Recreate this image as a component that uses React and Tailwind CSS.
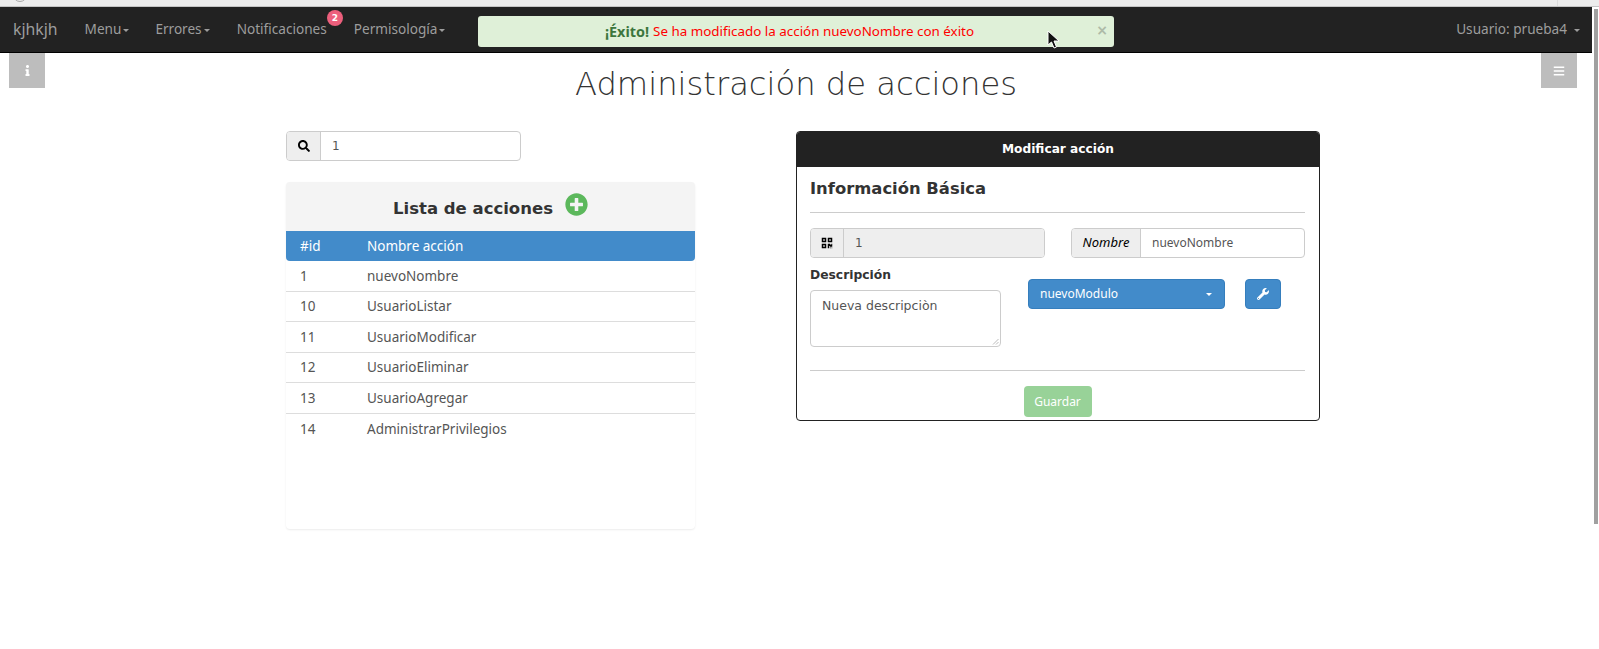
import React from 'react';
import {FaBars, FaInfo, FaPlusCircle, FaQrcode, FaSearch, FaWrench} from "react-icons/fa";

const ubuntu = "font-['Noto_Sans','Open_Sans',sans-serif]";
const dejavu = "font-['DejaVu_Sans',sans-serif]";

const acciones = [
    {id: 1, nombre: "nuevoNombre"},
    {id: 10, nombre: "UsuarioListar"},
    {id: 11, nombre: "UsuarioModificar"},
    {id: 12, nombre: "UsuarioEliminar"},
    {id: 13, nombre: "UsuarioAgregar"},
    {id: 14, nombre: "AdministrarPrivilegios"}
];

const Caret = ({className = ""}) => (
    <span className={"inline-block h-0 w-0 border-x-[3px] border-t-[3px] border-x-transparent border-t-current " + className}/>
);

const NavItem = ({children, caret = true, className = ""}) => (
    <div className={"relative flex items-center text-[13.6px] text-[#9d9d9d] " + className}>
        {children}
        {caret && <Caret className="ml-[2px] mt-[2px]"/>}
    </div>
);

const Navbar = () => (
    <nav className={"relative flex h-[46px] w-full items-center border-b border-black bg-[#222222] " + ubuntu}>
        <div className="ml-[13px] text-[15.8px] text-[#9d9d9d]">kjhkjh</div>
        <NavItem className="ml-[27px]">Menu</NavItem>
        <NavItem className="ml-[26px]">Errores</NavItem>
        <NavItem caret={false} className="ml-[27px]">
            Notificaciones
            <span className={"absolute -right-[16px] -top-[9px] flex h-[16px] w-[16px] items-center justify-center rounded-full bg-[#ec5f7c] text-[9px] font-bold text-white " + dejavu}>2</span>
        </NavItem>
        <NavItem className="ml-[27px]">Permisología</NavItem>
        <NavItem caret={false} className="ml-auto mr-[12px]">
            Usuario: prueba4
            <Caret className="ml-[7px] mt-[2px]"/>
        </NavItem>
        <div className="absolute left-[478px] top-[9px] flex h-[31px] w-[636px] items-center justify-center rounded-[3px] bg-[#dff0d8] pr-[13px] text-[13.4px]">
            <span className="text-[14.4px] font-bold text-[#3c763d]">¡Éxito!</span>
            <span className="ml-[4px] text-[#ff0000]">Se ha modificado la acción nuevoNombre con éxito</span>
            <span className={"absolute right-[6px] top-[4px] text-[14px] font-bold leading-[20px] text-[#aebba8] " + dejavu}>×</span>
        </div>
    </nav>
);

const SearchBox = () => (
    <div className={"flex h-[30px] w-[235px] rounded-[4px] border border-[#cccccc] text-[12px] text-[#555555] " + dejavu}>
        <div className="flex w-[34px] items-center justify-center rounded-l-[3px] border-r border-[#cccccc] bg-[#eeeeee] text-black">
            <FaSearch size={12}/>
        </div>
        <div className="flex items-center pl-[11px]">1</div>
    </div>
);

const ListaAcciones = () => (
    <div className={"mt-[21px] flex h-[347px] flex-col rounded-[4px] bg-white shadow-[0_1px_2px_rgba(0,0,0,0.08)] " + ubuntu}>
        <div className={"flex h-[49px] items-center justify-center rounded-t-[4px] bg-[#f4f4f4] pt-[6px] text-[16.5px] font-bold text-[#333333] " + dejavu}>
            Lista de acciones
            <FaPlusCircle size={23} className="mb-[11px] ml-[12px] text-[#5cb85c]"/>
        </div>
        <div className="flex h-[30px] items-center rounded-b-[4px] bg-[#428bca] text-[13.5px] text-white">
            <div className="w-[81px] pl-[14px]">#id</div>
            <div>Nombre acción</div>
        </div>
        {acciones.map((item, i) => (
            <div key={i} className={"flex h-[30.5px] shrink-0 items-center text-[13.5px] text-[#555555] " + (i < 5 ? "border-b border-[#dddddd]" : "")}>
                <div className="w-[81px] pl-[14px]">{item.id}</div>
                <div>{item.nombre}</div>
            </div>
        ))}
    </div>
);

const InputGroup = ({addon, value, className = "", addonStyle = "", valueStyle = ""}) => (
    <div className={"flex h-[30px] rounded-[4px] border border-[#cccccc] text-[12px] text-[#555555] " + className}>
        <div className={"flex items-center justify-center rounded-l-[3px] border-r border-[#cccccc] bg-[#eeeeee] " + addonStyle}>{addon}</div>
        <div className={"flex flex-1 items-center rounded-r-[3px] " + valueStyle}>{value}</div>
    </div>
);

const ModificarAccion = () => (
    <div className="h-[290px] w-[524px] rounded-[4px] border border-[#222222] bg-white">
        <div className={"flex h-[35px] items-center justify-center rounded-t-[3px] bg-[#222222] text-[12.2px] font-bold text-white " + dejavu}>Modificar acción</div>
        <div className="pl-[13px] pr-[14px]">
            <div className={"mt-[12px] text-[16.4px] font-bold leading-[20px] text-[#333333] " + dejavu}>Información Básica</div>
            <hr className="mt-[13px] border-[#cccccc]"/>
            <div className={"mt-[15px] flex justify-between " + dejavu}>
                <InputGroup className="w-[235px]" addonStyle="w-[33px] text-black" valueStyle="bg-[#eeeeee] pl-[11px]" addon={<FaQrcode size={12}/>} value="1"/>
                <InputGroup className={"w-[234px] " + ubuntu} addonStyle="w-[69px] text-[13px] italic text-black" valueStyle="pl-[11px]" addon="Nombre" value="nuevoNombre"/>
            </div>
            <div className="flex">
                <div className="w-[218px]">
                    <div className={"mt-[9px] text-[12.3px] font-bold leading-[16px] text-[#333333] " + dejavu}>Descripción</div>
                    <div className={"relative mt-[7px] h-[57px] w-[191px] rounded-[4px] border border-[#cccccc] px-[11px] pt-[6px] text-[12.5px] text-[#555555] " + dejavu}>
                        Nueva descripciòn
                        <svg className="absolute bottom-[1px] right-[1px]" width="7" height="7" viewBox="0 0 7 7">
                            <path d="M6.5 1 L1 6.5 M6.5 4 L4 6.5" stroke="#bbbbbb" strokeWidth="1" fill="none"/>
                        </svg>
                    </div>
                </div>
                <div className={"mt-[21px] flex h-[30px] w-[197px] items-center justify-between rounded-[4px] border border-[#357ebd] bg-[#428bca] pl-[11px] pr-[12px] text-[12px] text-white " + ubuntu}>
                    nuevoModulo
                    <Caret/>
                </div>
                <div className="ml-[20px] mt-[21px] flex h-[30px] w-[36px] items-center justify-center rounded-[4px] border border-[#357ebd] bg-[#428bca] text-white">
                    <FaWrench size={12}/>
                </div>
            </div>
            <hr className="mt-[23px] border-[#cccccc]"/>
            <div className={"mx-auto mt-[15px] flex h-[31px] w-[68px] items-center justify-center rounded-[4px] bg-[#98d298] text-[12px] text-white " + ubuntu}>Guardar</div>
        </div>
    </div>
);

const Cursor = () => (
    <svg className="absolute left-[1047px] top-[23px]" width="14" height="20" viewBox="0 0 14 20">
        <path d="M1 1 L1 15 L4.5 12 L7 18 L9.5 17 L7 11 L12 11 Z" fill="#111111" stroke="#ffffff" strokeWidth="1"/>
    </svg>
);

export default function App() {
    return (
        <div className="relative h-[649px] overflow-hidden bg-white">
            <div className="relative h-[7px] overflow-hidden border-b border-[#c4c4c4] bg-[#ececec]">
                <div className="absolute -top-[12px] left-[13px] h-[14px] w-[14px] rounded-full border border-[#a8a8a8]"/>
                <div className="absolute left-[1557px] top-0 h-[6px] w-px bg-[#dcdcdc]"/>
            </div>
            <div className="relative mr-[7px]">
                <Navbar/>
                <Cursor/>
                <div className="relative">
                    <div className="absolute left-[9px] top-0 flex h-[35px] w-[36px] items-center justify-center bg-[#bdbdbd] text-white"><FaInfo size={11}/></div>
                    <div className="absolute right-[15px] top-0 flex h-[35px] w-[36px] items-center justify-center bg-[#bdbdbd] text-white"><FaBars size={12}/></div>
                    <h1 className={"pt-[10px] text-center text-[32.2px] font-extralight leading-[42px] text-[#333333] " + dejavu}>Administración de acciones</h1>
                    <div className="mt-[26px] flex items-start pl-[286px]">
                        <div className="w-[409px]">
                            <SearchBox/>
                            <ListaAcciones/>
                        </div>
                        <div className="ml-[101px]">
                            <ModificarAccion/>
                        </div>
                    </div>
                </div>
            </div>
            <div className="absolute right-[1px] top-[9px] h-[515px] w-[4px] bg-[#a0a0a0]"/>
        </div>
    );
}
